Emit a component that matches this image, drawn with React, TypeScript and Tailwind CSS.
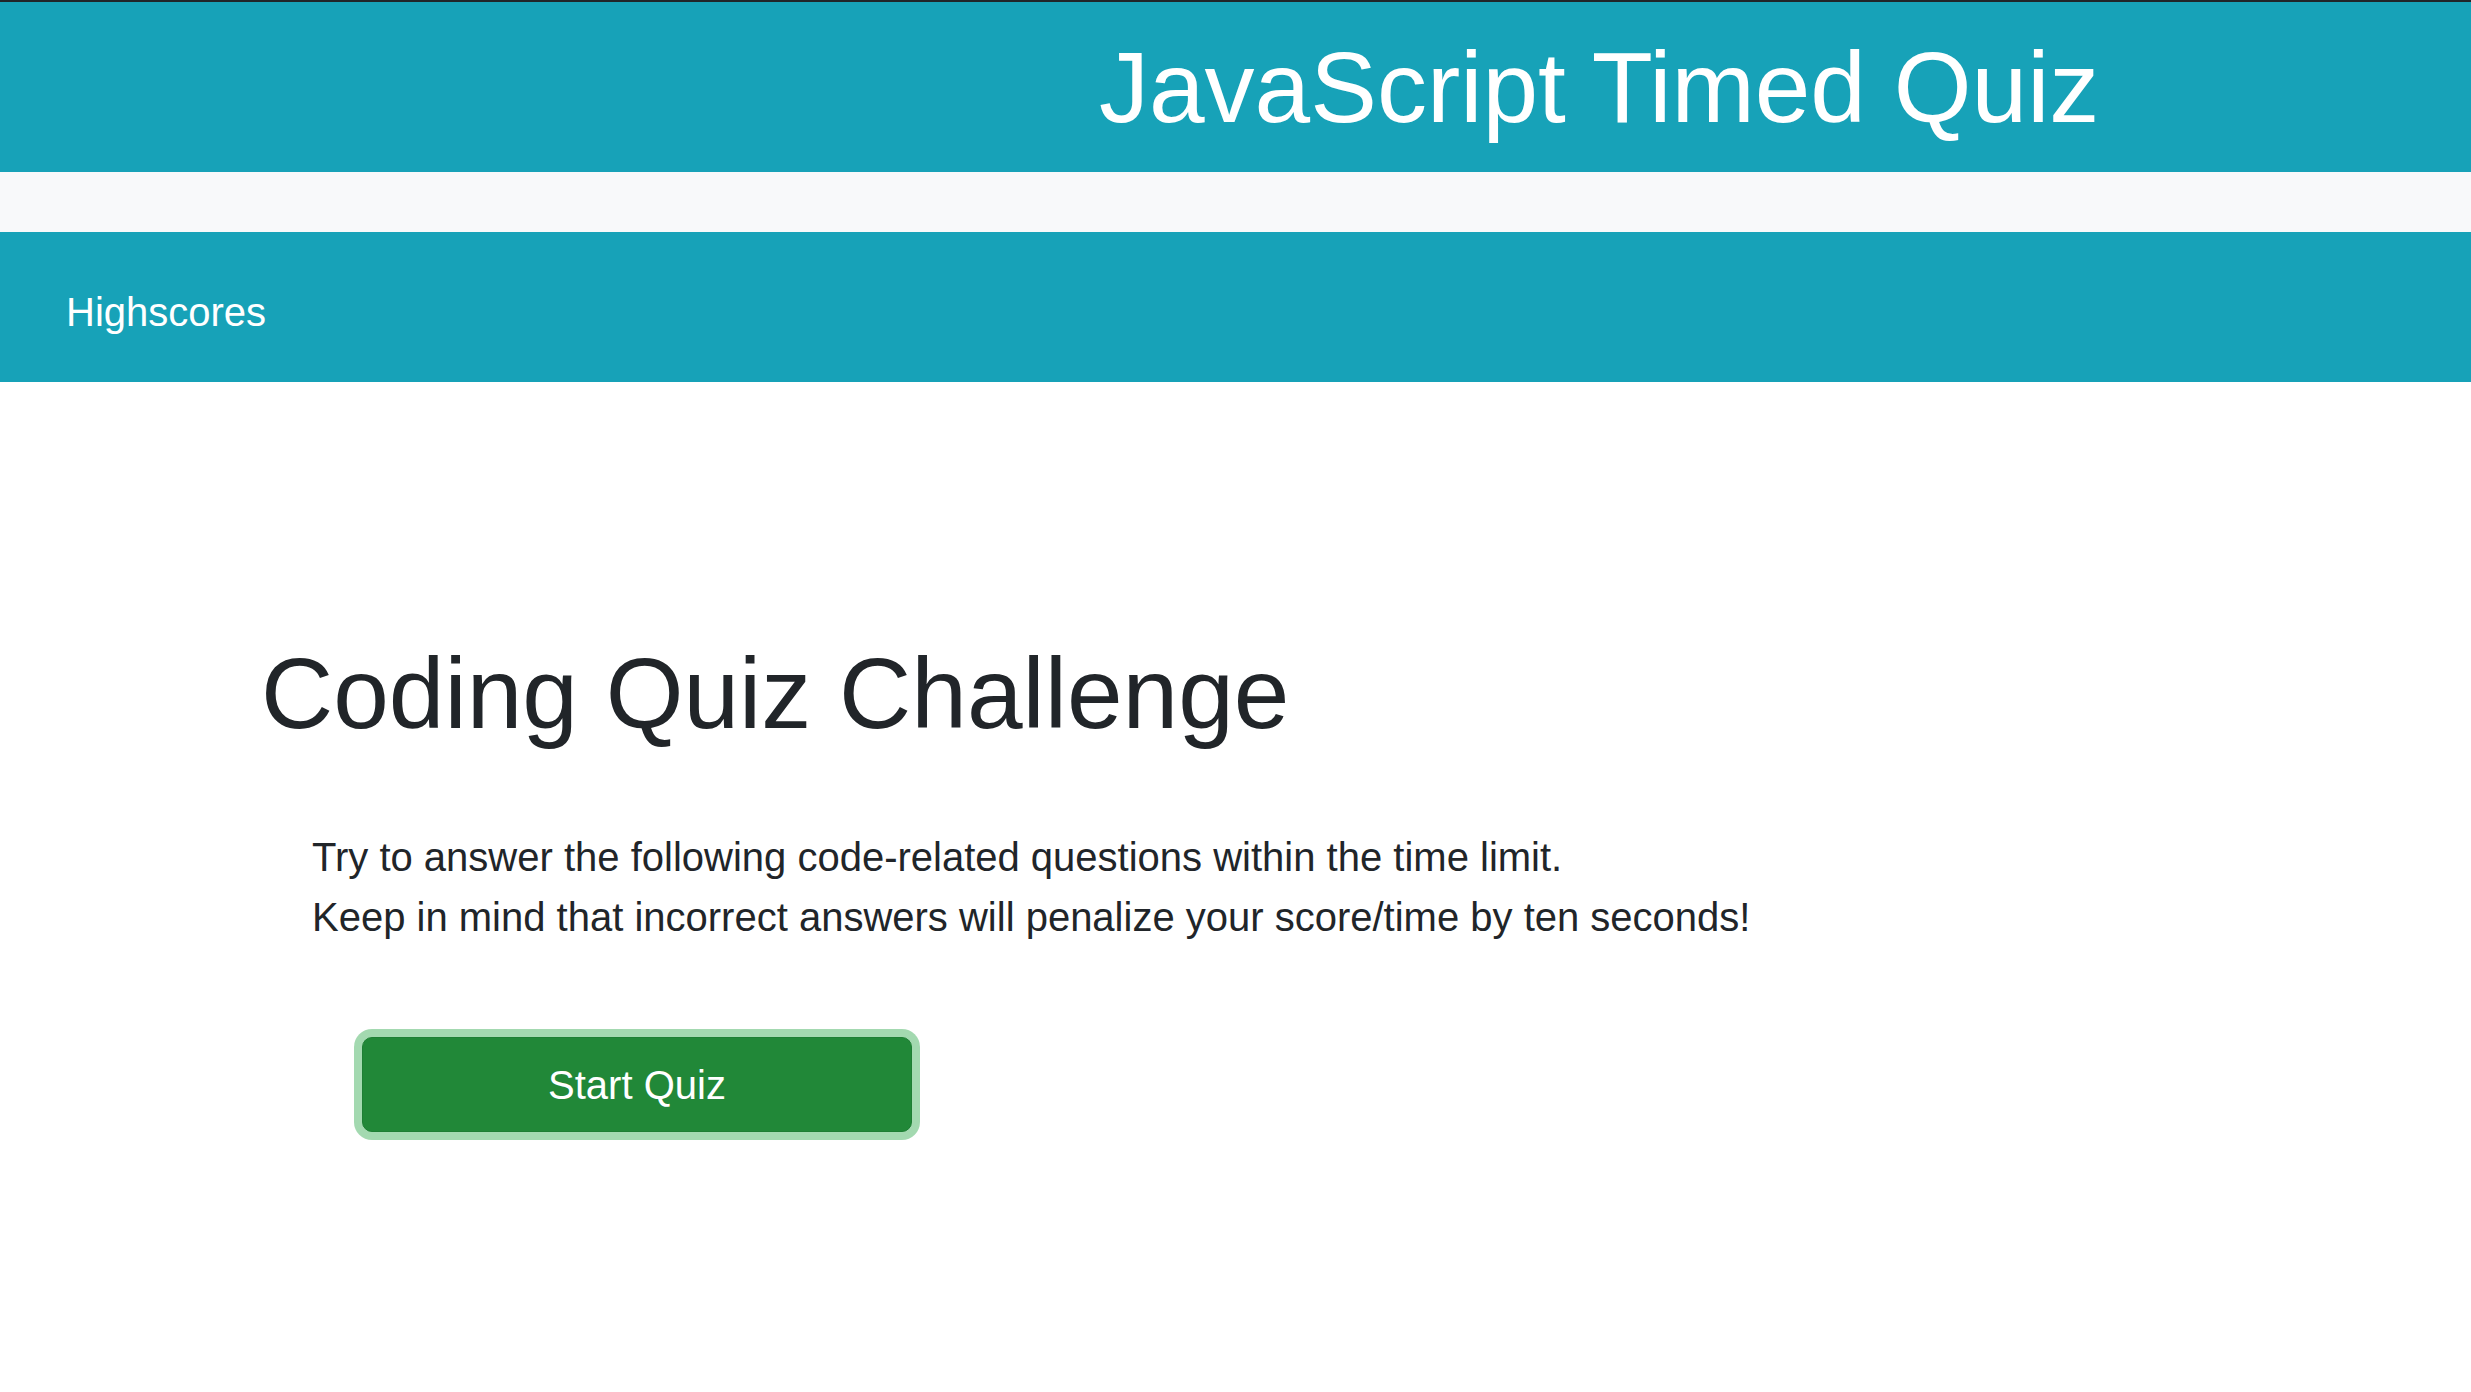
import React from "react";

export default function App() {
  return (
    <div className="min-h-screen bg-white font-['Liberation_Sans',Arial,sans-serif] text-[#212529]">
      <div className="h-[2px] bg-[#212529]" />
      <header className="bg-[#17a2b8] py-[25px] pl-[1099px]">
        <h1 className="m-0 whitespace-nowrap text-[100px] font-normal leading-[120px] text-white">
          JavaScript Timed Quiz
        </h1>
      </header>
      <div className="h-[60px] bg-[#f8f9fa]" />
      <nav className="bg-[#17a2b8] pt-[50px] pb-[40px] pl-[66px]">
        <a href="#" className="text-[40px] leading-[60px] text-white">
          Highscores
        </a>
      </nav>
      <main className="pt-[251px] pl-[261px]">
        <h1 className="m-0 text-[100px] font-normal leading-[120px]">
          Coding Quiz Challenge
        </h1>
        <p className="mt-[74px] pl-[51px] text-[40px] leading-[60px]">
          Try to answer the following code-related questions within the time limit.
          <br />
          Keep in mind that incorrect answers will penalize your score/time by ten seconds!
        </p>
        <button
          type="button"
          className="mt-[90px] ml-[101px] flex h-[95px] w-[550px] items-center justify-center rounded-[10px] border border-[#1e7e34] bg-[#218838] text-[40px] leading-[60px] text-white shadow-[0_0_0_8px_rgba(72,180,97,0.5)]"
        >
          Start Quiz
        </button>
      </main>
    </div>
  );
}
